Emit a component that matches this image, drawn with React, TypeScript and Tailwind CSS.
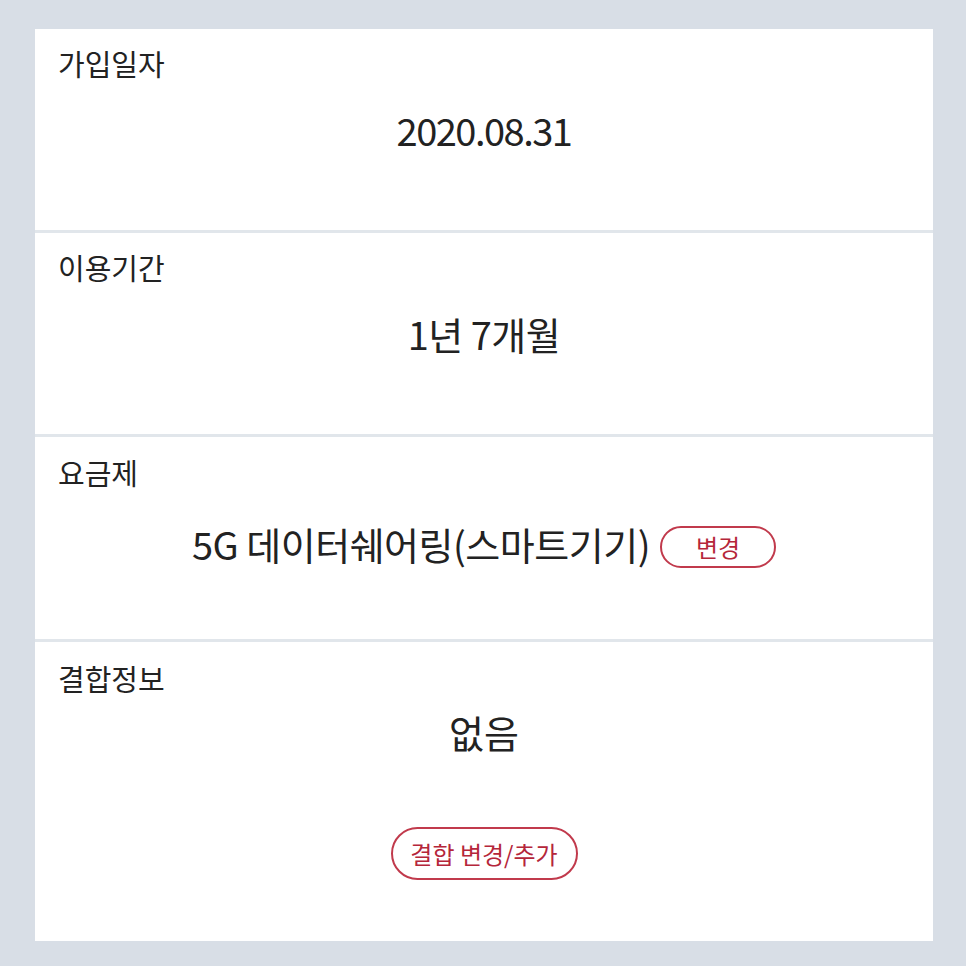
import React from "react";

const font = { fontFamily: '"Noto Sans CJK KR", "Noto Sans", sans-serif' };

function Label({ children }: { children: React.ReactNode }) {
  return <div className="text-[29px] leading-[36px] text-[#222222]">{children}</div>;
}

export default function App() {
  return (
    <div className="w-[966px] h-[966px] bg-[#d8dee6] pt-[29px] pl-[35px]" style={font}>
      <div className="w-[898px] h-[912px] bg-white flex flex-col">
        <div className="h-[204px] px-[23px] pt-[16px] border-b-[3px] border-[#e1e6eb]">
          <Label>가입일자</Label>
          <div className="mt-[25px] text-center text-[38px] leading-[48px] text-[#222222] tracking-[-1.5px]">2020.08.31</div>
        </div>
        <div className="h-[204px] px-[23px] pt-[16px] border-b-[3px] border-[#e1e6eb]">
          <Label>이용기간</Label>
          <div className="mt-[25px] text-center text-[38px] leading-[48px] text-[#222222] tracking-[-0.5px]">1년 7개월</div>
        </div>
        <div className="h-[205px] px-[23px] pt-[17px] border-b-[3px] border-[#e1e6eb]">
          <Label>요금제</Label>
          <div className="mt-[30px] flex items-center justify-center gap-[10px]">
            <span className="text-[38px] leading-[48px] text-[#222222] tracking-[-0.5px]">5G 데이터쉐어링(스마트기기)</span>
            <span className="mt-[6px] w-[116px] h-[42px] rounded-full border-2 border-[#c13a4c] text-[#b5263a] text-[24px] flex items-center justify-center">변경</span>
          </div>
        </div>
        <div className="flex-1 px-[23px] pt-[18px] flex flex-col">
          <Label>결합정보</Label>
          <div className="mt-[12px] text-center text-[38px] leading-[48px] text-[#222222]">없음</div>
          <div className="mt-[71px] flex justify-center">
            <span className="w-[187px] h-[53px] rounded-full border-2 border-[#c13a4c] text-[#b5263a] text-[24px] flex items-center justify-center">결합 변경/추가</span>
          </div>
        </div>
      </div>
    </div>
  );
}
